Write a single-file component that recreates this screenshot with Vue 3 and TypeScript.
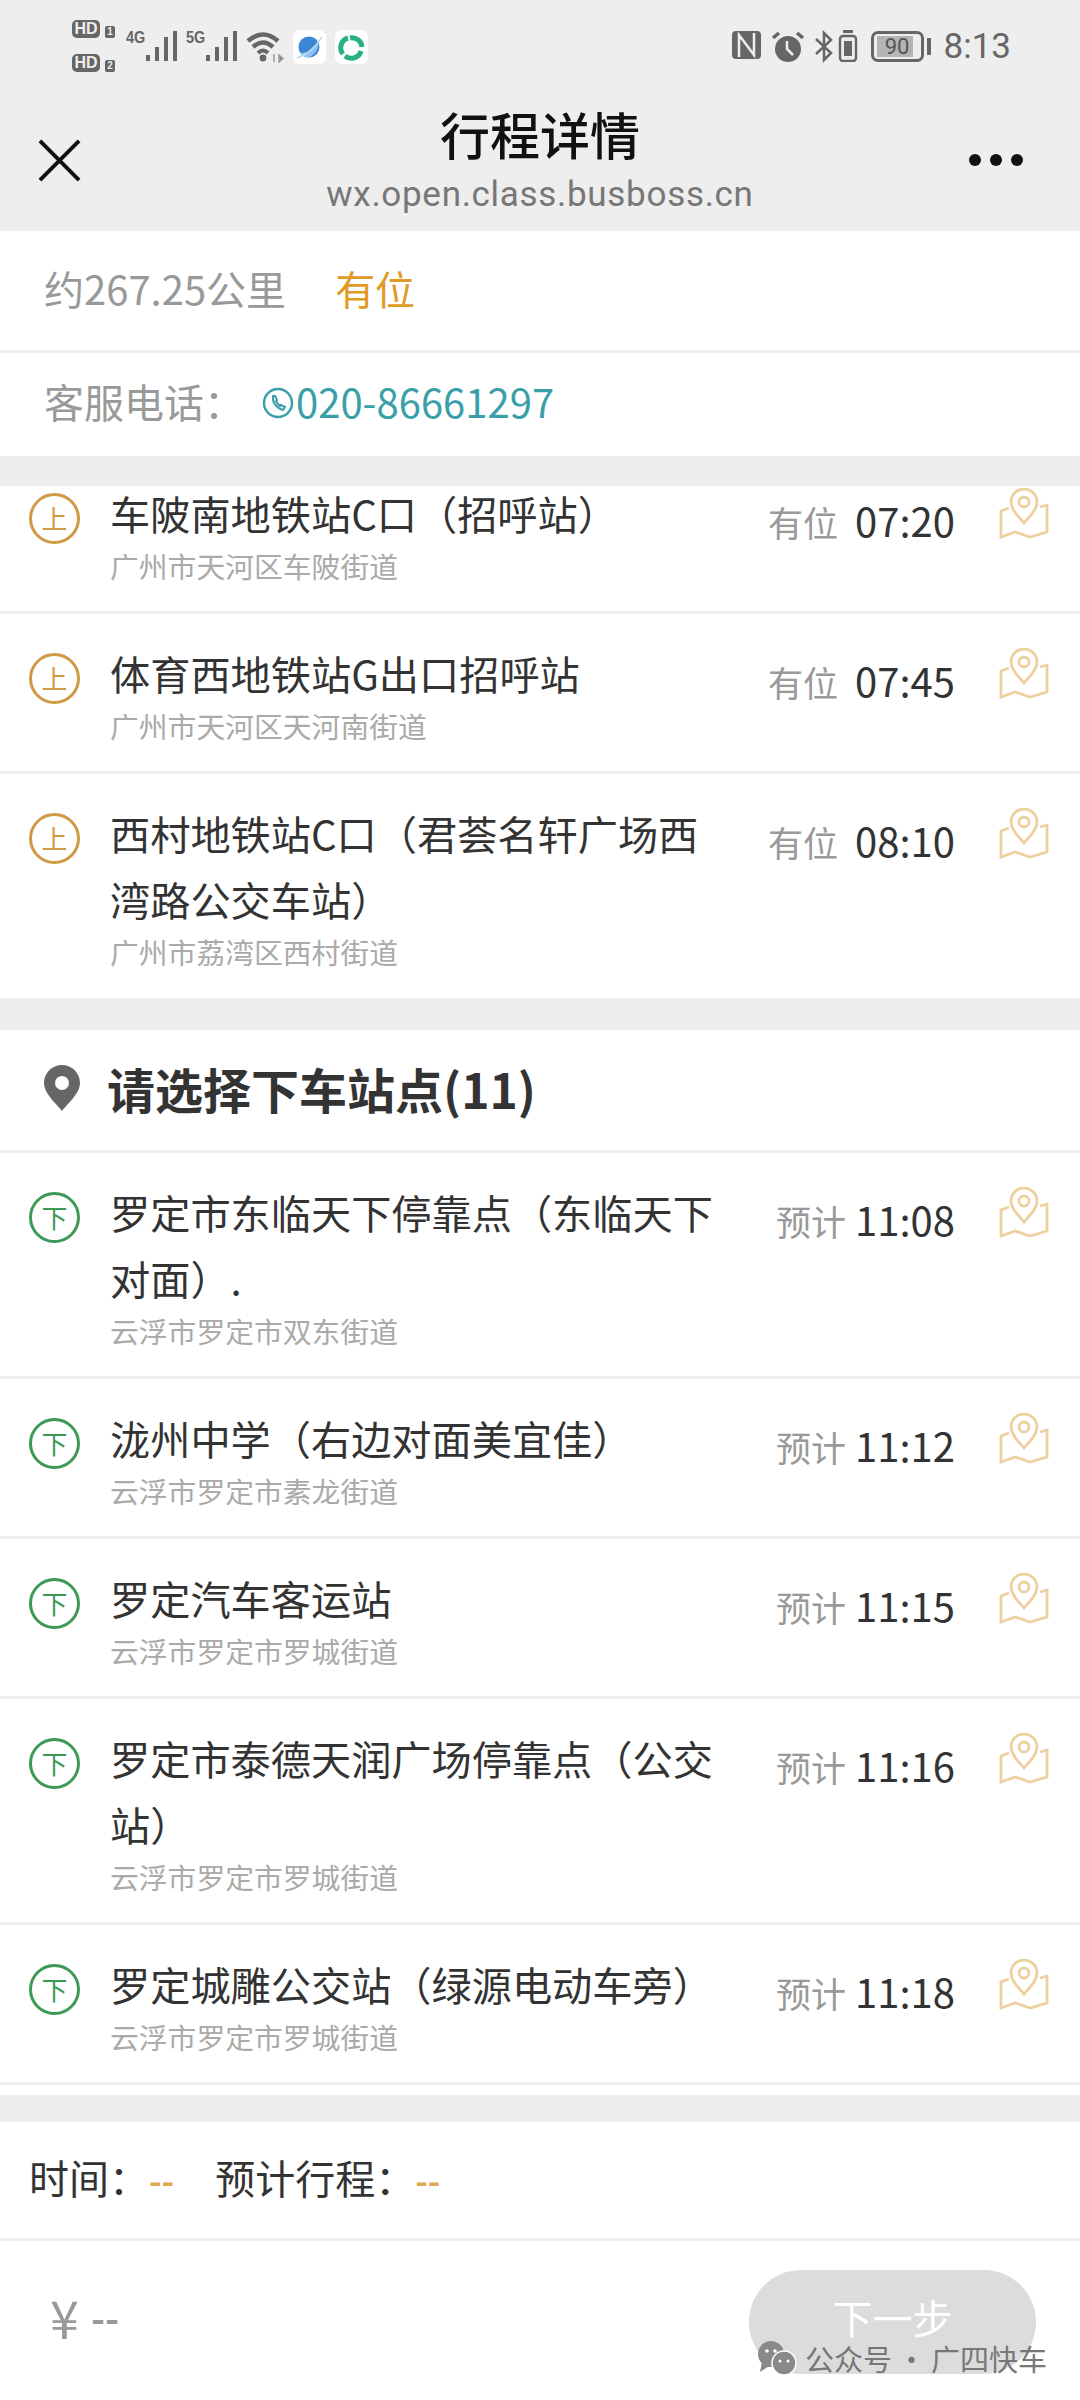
<script setup lang="ts">
type Stop = { name: string; addr: string; label: string; time: string }

const upStops: Stop[] = [
  { name: '车陂南地铁站C口（招呼站）', addr: '广州市天河区车陂街道', label: '有位', time: '07:20' },
  { name: '体育西地铁站G出口招呼站', addr: '广州市天河区天河南街道', label: '有位', time: '07:45' },
  { name: '西村地铁站C口（君荟名轩广场西湾路公交车站）', addr: '广州市荔湾区西村街道', label: '有位', time: '08:10' },
]

const downStops: Stop[] = [
  { name: '罗定市东临天下停靠点（东临天下对面）.', addr: '云浮市罗定市双东街道', label: '预计', time: '11:08' },
  { name: '泷州中学（右边对面美宜佳）', addr: '云浮市罗定市素龙街道', label: '预计', time: '11:12' },
  { name: '罗定汽车客运站', addr: '云浮市罗定市罗城街道', label: '预计', time: '11:15' },
  { name: '罗定市泰德天润广场停靠点（公交站）', addr: '云浮市罗定市罗城街道', label: '预计', time: '11:16' },
  { name: '罗定城雕公交站（绿源电动车旁）', addr: '云浮市罗定市罗城街道', label: '预计', time: '11:18' },
]

const bars = [6, 14, 24, 30]
</script>

<template>
  <div class="page">
    <header class="top">
      <div class="status">
        <div class="status-left">
          <div class="sims">
            <span class="sim"><b>HD</b><i>1</i></span>
            <span class="sim"><b>HD</b><i>2</i></span>
          </div>
          <div v-for="net in ['4G', '5G']" :key="net" class="signal">
            <span class="net">{{ net }}</span>
            <span class="bars">
              <span v-for="h in bars" :key="h" class="bar" :style="{ height: h + 'px' }"></span>
            </span>
          </div>
          <svg class="wifi" viewBox="0 0 38 32" width="38" height="32">
            <path d="M2 10 Q17 -3 32 10" fill="none" stroke="#666" stroke-width="4.5" />
            <path d="M7 16 Q17 7 27 16" fill="none" stroke="#666" stroke-width="4.5" />
            <path d="M12 22 Q17 17 22 22" fill="none" stroke="#666" stroke-width="4" />
            <circle cx="17" cy="27" r="3.4" fill="#666" />
            <path d="M28 23 V31 M33 24 L37 27.5 L33 31 Z" stroke="#999" stroke-width="1.5" fill="#888" />
          </svg>
          <span class="app">
            <svg viewBox="0 0 33 34" width="33" height="34">
              <circle cx="16" cy="17" r="10.5" fill="#3d86d6" />
              <path d="M7 23 Q20 24 25 11 Q27 21 17 27 Q11 28 7 23 Z" fill="#8cc2ee" />
              <path d="M4 28 Q18 24 29 7" fill="none" stroke="#bcdcf6" stroke-width="1.5" />
            </svg>
          </span>
          <span class="app">
            <svg viewBox="0 0 33 34" width="33" height="34" fill="none" stroke="#27b27f" stroke-width="5">
              <path d="M8 24 A10 10 0 0 1 13 8" />
              <path d="M15 8 A10 10 0 0 1 27 17" />
              <path d="M26 21 A10 10 0 0 1 10 26" />
            </svg>
          </span>
        </div>
        <div class="status-right">
          <svg viewBox="0 0 29 28" width="29" height="28">
            <rect width="29" height="28" rx="4" fill="#666" />
            <path d="M7 26 V4 L22 24 V2" fill="none" stroke="#eee" stroke-width="2.5" />
          </svg>
          <svg viewBox="0 0 32 32" width="32" height="32">
            <circle cx="16" cy="18" r="13" fill="#666" />
            <path d="M15 10 V18 L21 24" fill="none" stroke="#eee" stroke-width="2.5" />
            <path d="M1 7 L7 2 M31 7 L25 2" stroke="#666" stroke-width="3.5" />
          </svg>
          <div class="bt-group">
            <svg viewBox="0 0 18 33" width="18" height="33" fill="none" stroke="#666" stroke-width="2.5">
              <path d="M1 9 L16 23 L9 30 V3 L16 10 L1 24" />
            </svg>
            <svg viewBox="0 0 20 32" width="20" height="32">
              <rect x="2" y="6" width="16" height="25" rx="3" fill="none" stroke="#666" stroke-width="2.4" />
              <rect x="5" y="0" width="10" height="3" fill="#666" />
              <rect x="6" y="11" width="8" height="15" fill="#666" />
            </svg>
          </div>
          <div class="battery">
            <span class="battery-body">90</span>
            <span class="battery-tip"></span>
          </div>
          <span class="clock">8:13</span>
        </div>
      </div>

      <div class="nav">
        <svg class="close" viewBox="0 0 44 44" width="44" height="44">
          <path d="M2 2 L42 42 M42 2 L2 42" stroke="#111" stroke-width="4" />
        </svg>
        <div class="nav-title">
          <h1>行程详情</h1>
          <p>wx.open.class.busboss.cn</p>
        </div>
        <div class="dots"><span></span><span></span><span></span></div>
      </div>
    </header>

    <section class="info">
      <div class="info-row">
        <span>约267.25公里</span>
        <span class="seat">有位</span>
      </div>
      <div class="info-row phone-row">
        <span>客服电话：</span>
        <svg class="phone-icon" viewBox="0 0 32 32" width="32" height="32" fill="none" stroke="#3a9fa8">
          <circle cx="16" cy="16" r="14" stroke-width="2.4" />
          <path d="M11 9 C10 15 14 21 21 23 L23 20 L19 18 L18 19 C16 18 15 16 14 14 L15 13 L13 9 Z" stroke-width="2" />
        </svg>
        <span class="phone">020-86661297</span>
      </div>
    </section>

    <div class="gap"></div>

    <div class="scroller">
      <div class="scroller-inner">
        <div v-for="s in upStops" :key="s.name" class="stop">
          <span class="badge up">上</span>
          <div class="stop-main">
            <div class="stop-name">{{ s.name }}</div>
            <div class="stop-addr">{{ s.addr }}</div>
          </div>
          <div class="stop-time"><span class="lbl">{{ s.label }}</span>{{ s.time }}</div>
          <svg class="map" viewBox="0 0 50 52" width="50" height="52" fill="none" stroke="#eed0a0" stroke-width="2.8">
            <path d="M25 35 C18 27 12 21 12 14 A13 13 0 0 1 38 14 C38 21 32 27 25 35 Z" />
            <circle cx="25" cy="14" r="5" />
            <path d="M10 20 L2 23 V49 L16 44 L31 49 L48 44 V17 L41 19" />
          </svg>
        </div>
      </div>
    </div>

    <div class="gap gap-lower"></div>

    <div class="section-head">
      <svg viewBox="0 0 36 46" width="36" height="46">
        <path fill-rule="evenodd" fill="#666" d="M18 0 C8 0 0 8 0 18 C0 29 14 40 18 46 C22 40 36 29 36 18 C36 8 28 0 18 0 Z M18 11 A7 7 0 1 1 18 25 A7 7 0 1 1 18 11 Z" />
      </svg>
      <h2>请选择下车站点(11)</h2>
    </div>

    <div class="stops">
      <div v-for="s in downStops" :key="s.name" class="stop">
        <span class="badge down">下</span>
        <div class="stop-main">
          <div class="stop-name">{{ s.name }}</div>
          <div class="stop-addr">{{ s.addr }}</div>
        </div>
        <div class="stop-time narrow"><span class="lbl">{{ s.label }}</span>{{ s.time }}</div>
        <svg class="map" viewBox="0 0 50 52" width="50" height="52" fill="none" stroke="#eed0a0" stroke-width="2.8">
          <path d="M25 35 C18 27 12 21 12 14 A13 13 0 0 1 38 14 C38 21 32 27 25 35 Z" />
          <circle cx="25" cy="14" r="5" />
          <path d="M10 20 L2 23 V49 L16 44 L31 49 L48 44 V17 L41 19" />
        </svg>
      </div>
    </div>

    <div class="gap gap-bottom"></div>

    <div class="summary">
      <span>时间：<em>--</em></span>
      <span>预计行程：<em>--</em></span>
    </div>

    <footer class="pay">
      <div class="price"><span class="yen">¥</span><span class="dash">--</span></div>
      <button class="next">下一步</button>
      <div class="mark">
        <svg viewBox="0 0 40 36" width="40" height="36">
          <ellipse cx="14" cy="14" rx="13" ry="13" fill="#8a8a8a" />
          <path d="M5 22 L3 32 L12 26 Z" fill="#8a8a8a" />
          <ellipse cx="27" cy="23" rx="12" ry="12" fill="#8a8a8a" stroke="#fff" stroke-width="1.5" />
          <circle cx="10" cy="11" r="1.8" fill="#fff" />
          <circle cx="18" cy="11" r="1.8" fill="#fff" />
          <circle cx="23" cy="21" r="1.6" fill="#fff" />
          <circle cx="31" cy="21" r="1.6" fill="#fff" />
        </svg>
        <span>公众号 · 广四快车</span>
      </div>
    </footer>
  </div>
</template>

<style>
html,
body {
  margin: 0;
  background: #fff;
}
</style>

<style scoped>
.page {
  width: 1080px;
  height: 2400px;
  overflow: hidden;
  position: relative;
  font-family: "Noto Sans CJK SC", "Noto Sans", sans-serif;
  color: #333;
  background: #fff;
}

.top {
  height: 231px;
  background: #eee;
}

.status {
  height: 96px;
  display: flex;
  justify-content: space-between;
  padding: 20px 69px 0 72px;
  box-sizing: border-box;
}

.status-left,
.status-right {
  display: flex;
  align-items: flex-start;
}

.status-left {
  gap: 9px;
}

.sims {
  display: flex;
  flex-direction: column;
  gap: 16px;
  width: 45px;
}

.sim {
  display: flex;
  align-items: flex-end;
  height: 18px;
  gap: 5px;
  font-family: "Liberation Sans", sans-serif;
  font-weight: 700;
  color: #eee;
}

.sim b {
  background: #666;
  border-radius: 5px;
  width: 28px;
  height: 18px;
  font-size: 16px;
  line-height: 18px;
  text-align: center;
}

.sim i {
  background: #666;
  border-radius: 2px;
  width: 10px;
  height: 12px;
  font-size: 10px;
  line-height: 12px;
  font-style: normal;
  text-align: center;
}

.signal {
  position: relative;
  width: 51px;
  height: 41px;
  display: flex;
  justify-content: flex-end;
  align-items: flex-end;
}

.net {
  position: absolute;
  left: 0;
  top: 10px;
  font-family: "Liberation Sans", sans-serif;
  font-size: 17px;
  line-height: 16px;
  font-weight: 700;
  transform: scaleX(0.85);
  transform-origin: left;
  color: #666;
}

.bars {
  display: flex;
  align-items: flex-end;
  gap: 5px;
}

.bar {
  width: 4px;
  background: #666;
}

.wifi {
  margin-top: 11px;
}

.app {
  width: 33px;
  height: 34px;
  margin-top: 10px;
  background: #fff;
  border-radius: 7px;
}

.status-right {
  gap: 11px;
  padding-top: 11px;
}

.bt-group {
  display: flex;
  gap: 5px;
  margin-top: -1px;
}

.battery {
  display: flex;
  align-items: center;
  gap: 3px;
  margin-left: 2px;
}

.battery-body {
  width: 53px;
  height: 31px;
  box-sizing: border-box;
  border: 3px solid #666;
  border-radius: 7px;
  background: linear-gradient(#b4b4b4, #b4b4b4) no-repeat 3px 2px / 36px 21px;
  font-family: Roboto, sans-serif;
  font-size: 22px;
  line-height: 25px;
  text-align: center;
  color: #555;
}

.battery-tip {
  width: 4px;
  height: 17px;
  background: #666;
}

.clock {
  font-family: Roboto, sans-serif;
  font-size: 35px;
  line-height: 32px;
  color: #666;
  margin-left: 2px;
}

.nav {
  position: relative;
  height: 135px;
  display: flex;
  align-items: center;
  justify-content: space-between;
  padding: 0 57px 0 38px;
}

.close {
  margin-top: -6px;
  width: 43px;
  height: 43px;
}

.nav-title {
  position: absolute;
  left: 0;
  right: 0;
  top: 7px;
  text-align: center;
}

.nav-title h1 {
  margin: 0;
  font-size: 50px;
  line-height: 60px;
  font-weight: 500;
  color: #111;
}

.nav-title p {
  margin: 0;
  padding-top: 5px;
  font-family: Roboto, sans-serif;
  font-size: 35px;
  line-height: 54px;
  letter-spacing: 0.7px;
  color: #777;
}

.dots {
  display: flex;
  gap: 9px;
  margin-top: -8px;
}

.dots span {
  width: 12px;
  height: 12px;
  border-radius: 50%;
  background: #111;
}

.info-row {
  display: flex;
  align-items: center;
  gap: 49px;
  height: 122px;
  padding: 0 0 6px 44px;
  font-size: 40px;
  color: #999;
  border-bottom: 3px solid #eee;
  box-sizing: border-box;
}

.phone-row {
  height: 103px;
  gap: 0;
  padding-bottom: 8px;
  border-bottom: 0;
}

.seat {
  color: #e09a25;
}

.phone-icon {
  margin: 4px 2px 0 18px;
}

.phone {
  color: #3a9fa8;
}

.gap {
  height: 30px;
  background: #eee;
}

.gap-lower {
  height: 32px;
}

.scroller {
  height: 512px;
  overflow: hidden;
}

.scroller-inner {
  margin-top: -32px;
}

.stop {
  position: relative;
  padding: 26px 0 28px 110px;
  border-bottom: 3px solid #eee;
}

.scroller .stop:last-child {
  border-bottom: 0;
}

.stop-main {
  width: 612px;
}

.stop-name {
  font-size: 40.2px;
  line-height: 66px;
  color: #333;
}

.stop-addr {
  margin-top: 3px;
  font-size: 28.8px;
  line-height: 34px;
  color: #aaa;
}

.badge {
  position: absolute;
  left: 29px;
  top: 39px;
  width: 51px;
  height: 51px;
  box-sizing: border-box;
  border-radius: 50%;
  border: 3px solid;
  font-size: 26px;
  line-height: 44px;
  text-align: center;
}

.badge.up {
  color: #cf9a45;
}

.badge.down {
  color: #3d9a56;
}

.stop-time {
  position: absolute;
  right: 125px;
  top: 39px;
  font-size: 40px;
  line-height: 54px;
  color: #333;
}

.lbl {
  font-size: 35px;
  color: #999;
  margin-right: 17px;
}

.stop-time.narrow .lbl {
  margin-right: 9px;
}

.map {
  position: absolute;
  left: 999px;
  top: 34px;
}

.section-head {
  height: 123px;
  box-sizing: border-box;
  display: flex;
  align-items: center;
  gap: 27px;
  padding: 0 0 5px 44px;
  border-bottom: 3px solid #eee;
}

.section-head h2 {
  margin: 0;
  font-size: 48px;
  font-weight: 700;
  color: #333;
}

.stops {
  height: 942px;
  box-sizing: border-box;
  padding-bottom: 11px;
}

.gap-bottom {
  height: 27px;
}

.summary {
  height: 119px;
  box-sizing: border-box;
  display: flex;
  align-items: center;
  gap: 41px;
  padding: 0 0 7px 29px;
  font-size: 40px;
  color: #333;
  border-bottom: 3px solid #eee;
}

.summary em {
  font-style: normal;
  font-weight: 700;
  color: #e0a850;
  font-size: 34px;
}

.pay {
  position: relative;
  height: 159px;
}

.price {
  position: absolute;
  left: 50px;
  top: 46px;
  display: flex;
  align-items: center;
  gap: 12px;
  font-size: 38px;
  line-height: 60px;
  color: #999;
}

.yen {
  font-size: 52px;
}

.dash {
  font-weight: 700;
}

.next {
  position: absolute;
  left: 749px;
  top: 29px;
  width: 287px;
  height: 104px;
  padding: 0 0 10px;
  border: 0;
  border-radius: 52px;
  background: #dcdcdc;
  color: #fff;
  font-family: inherit;
  font-size: 40px;
}

.mark {
  position: absolute;
  left: 757px;
  top: 97px;
  display: flex;
  align-items: center;
  gap: 8px;
  color: #777;
  font-size: 29px;
  line-height: 40px;
  word-spacing: -1.5px;
  white-space: nowrap;
}
</style>
